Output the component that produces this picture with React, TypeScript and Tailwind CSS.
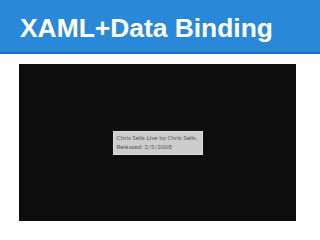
import React from "react";

export default function App() {
  return (
    <div className="w-[320px] h-[240px] bg-white overflow-hidden">
      <div className="h-[54px] bg-[#2a88d9] border-b-2 border-[#1f6fc0] pl-[20px] pt-[15px]">
        <div
          className="text-white font-bold text-[26.4px] leading-[26px]"
          style={{ fontFamily: '"Liberation Sans", Arial, sans-serif' }}
        >
          XAML+Data Binding
        </div>
      </div>
      <div className="pl-[19px] pt-[10px]">
        <div className="w-[277px] h-[157px] bg-[#0e0e0e] flex items-center justify-center">
          <div
            className="w-[90px] h-[24px] bg-[#cdcdcd] border border-[#dcdcdc] pl-[3px] pt-[1px] text-[#5a5a5a] text-[6.3px] leading-[9px] whitespace-nowrap"
            style={{ fontFamily: 'Lato, "Noto Sans", sans-serif' }}
          >
            <div>Chris Sells Live by Chris Sells,</div>
            <div>Released: 2/5/2008</div>
          </div>
        </div>
      </div>
    </div>
  );
}
